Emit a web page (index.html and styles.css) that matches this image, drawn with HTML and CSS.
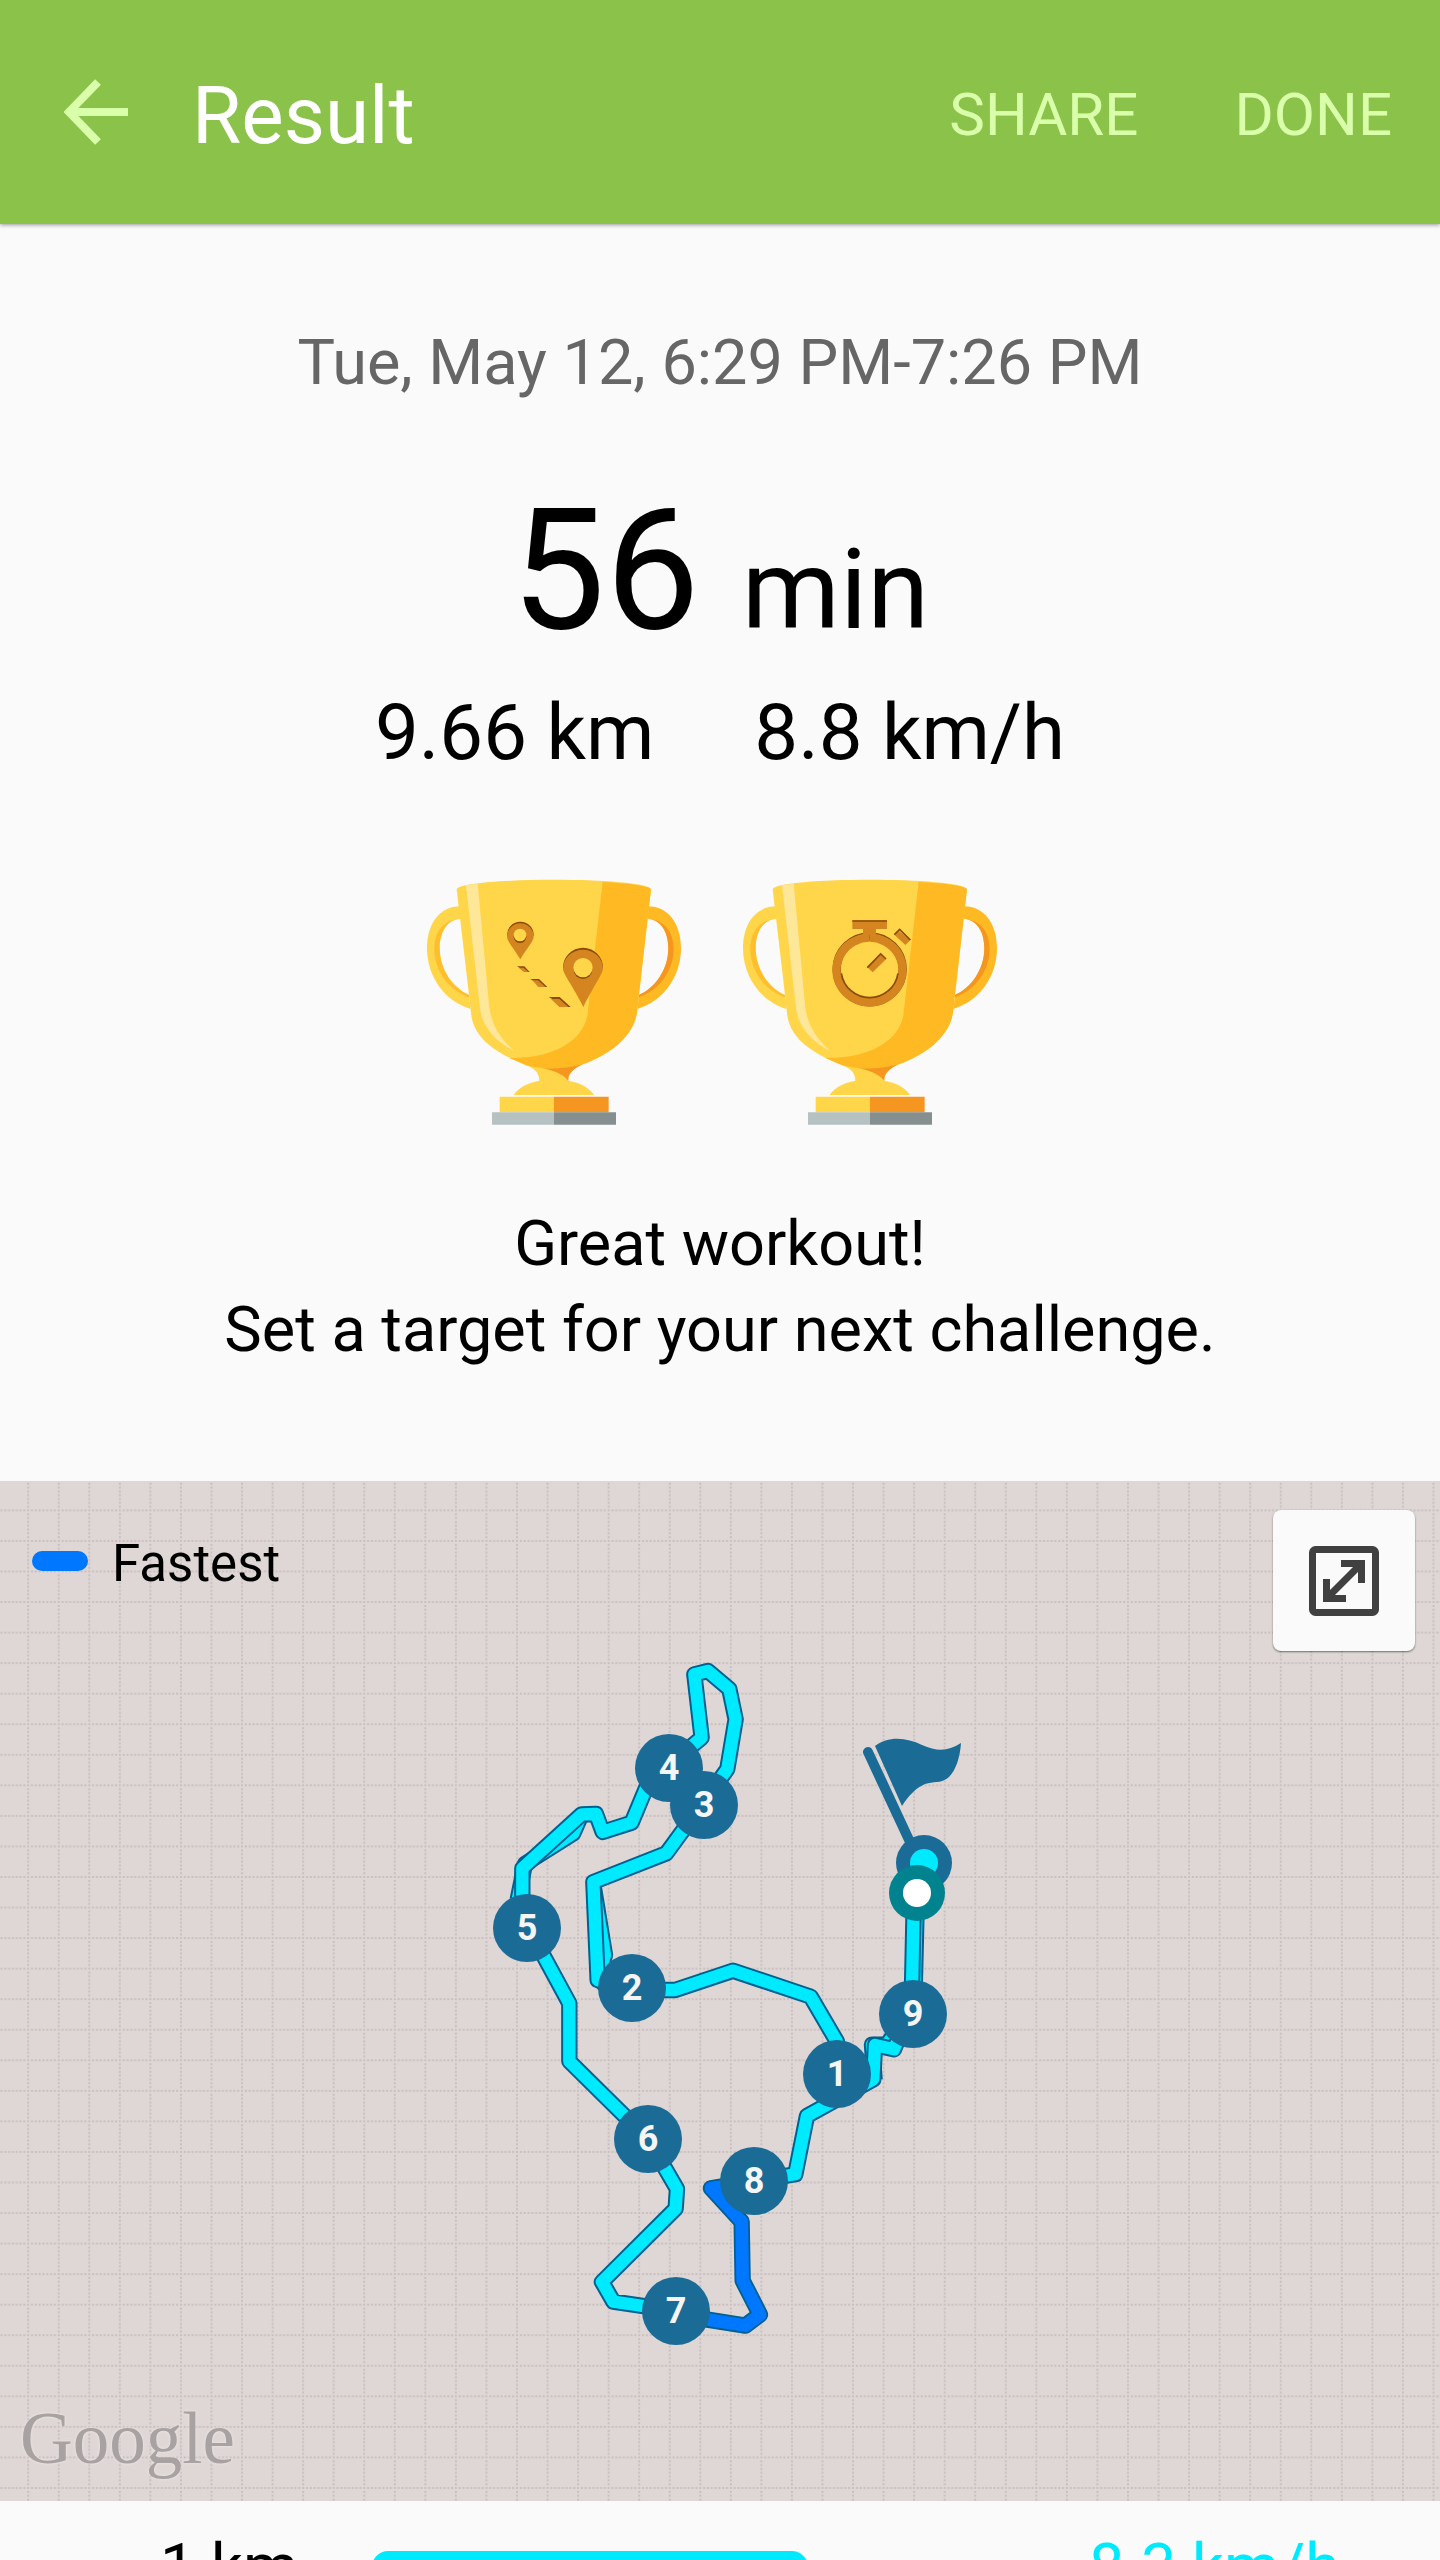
FILE: index.html
```
<!DOCTYPE html>
<html lang="en">
<head>
	<meta charset="UTF-8">
	<meta name="viewport" content="width=device-width, initial-scale=1">
	<title>Result</title>
	<link rel="stylesheet" href="styles.css">
</head>
<body>
	<header class="bar">
		<button type="button" class="back" aria-label="Back">
			<svg width="64" height="66" viewBox="0 0 64 66"><path d="M34 3 L5 33 L34 63 M5 33 H64" fill="none" stroke="#d9ffaa" stroke-width="8"/></svg>
		</button>
		<h1 class="bar-title">Result</h1>
		<button type="button" class="action">SHARE</button>
		<button type="button" class="action">DONE</button>
	</header>

	<main class="content">
		<section class="summary">
			<p class="date">Tue, May 12, 6:29 PM-7:26 PM</p>
			<p class="duration"><span class="num">56</span> <span class="unit">min</span></p>
			<p class="stats"><span>9.66 km</span> <span>8.8 km/h</span></p>
			<div class="trophies">
				<svg class="trophy" viewBox="12 57 948 738" role="img" aria-label="Distance trophy">
					<defs>
						<g id="cup">
							<path fill="#ffd54a" d="M180 139 C120 139 81 190 81 265 C81 350 135 425 212 447 L207 405 C160 385 119 330 119 265 C119 210 145 178 182 176Z"/>
							<path fill="#ffbe2b" d="M180 176 C130 180 103 215 103 268 C103 330 145 392 207 412 V405 C160 385 119 330 119 265 C119 210 145 178 180 176Z"/>
							<path fill="#ffb923" d="M744 139 C804 139 843 190 843 265 C843 350 789 425 712 447 L717 405 C764 385 805 330 805 265 C805 210 779 178 742 176Z"/>
							<path fill="#f4961f" d="M744 176 C794 180 821 215 821 268 C821 330 779 392 717 412 V405 C764 385 805 330 805 265 C805 210 779 178 744 176Z"/>
							<path fill="#ffd54a" d="M170 88 C185 50 739 50 753 88 L712 447 C708 520 640 580 548 613 C520 623 505 640 505 662 C540 668 570 684 582 705 H341 C355 682 385 668 418 662 C418 640 405 625 376 615 C280 575 214 530 212 447Z"/>
							<path fill="#ffb923" d="M608 66 C690 70 748 78 753 88 L712 447 C708 520 640 580 548 613 C500 630 430 630 380 616 L328 594 C470 596 560 535 564 450Z"/>
							<path fill="#f4961f" d="M425 625 C470 627 510 623 550 613 C520 625 503 642 505 662 C490 644 460 630 425 625Z"/>
							<path fill="#ffe799" d="M198 76 L233 71 L268 443 C276 500 305 540 344 574 C290 547 244 500 240 443Z"/>
							<path fill="#ffd54a" d="M299 710 H462 V757 H299Z"/>
							<path fill="#f4961f" d="M462 710 H626 V757 H462Z"/>
							<path fill="#b6c2c2" d="M276 757 H462 V794 H276Z"/>
							<path fill="#868f8f" d="M462 757 H648 V794 H462Z"/>
						</g>
					</defs>
					<use href="#cup"/>
					<g fill="#8a4a0a">
						<path d="M361 185 A40 40 0 0 1 401 227 H321 A40 40 0 0 1 361 185Z"/>
						<path d="M549 263 A60 60 0 0 1 609 324 H489 A60 60 0 0 1 549 263Z"/>
						<path d="M351 319 H373 L389 336 H379Z M391 357 H417 L442 381 H430Z M446 411 H479 L512 441 H500Z"/>
					</g>
					<g fill="#d5851f">
						<path d="M361 190 A40 39 0 0 1 401 229 C401 244 384 260 361 298 C338 260 321 244 321 229 A40 39 0 0 1 361 190Z"/>
						<path d="M549 269 A60 58 0 0 1 609 327 C606 345 580 380 550 441 C520 380 491 345 489 327 A60 58 0 0 1 549 269Z"/>
						<path d="M356 323 H371 L385 336 H372Z M397 361 H414 L436 381 H415Z M453 417 H478 L505 441 H478Z"/>
					</g>
					<g fill="#8a4a0a"><circle cx="360" cy="230" r="19"/><circle cx="549" cy="329" r="28"/></g>
					<g fill="#ffd54a"><circle cx="360" cy="225" r="19"/><circle cx="549" cy="323" r="29"/></g>
				</svg>
				<svg class="trophy" viewBox="12 57 948 738" role="img" aria-label="Duration trophy">
					<use href="#cup"/>
					<g fill="none" stroke-width="25">
						<circle cx="461" cy="328" r="99" stroke="#8a4a0a"/>
						<path stroke="#d5851f" d="M461 233 A99 97 0 1 1 460 233"/>
						<path stroke="#8a4a0a" stroke-width="5" d="M376 340 A86 86 0 0 0 546 340"/>
					</g>
					<path fill="#d5851f" d="M409 181 H513 V207 H480 V225 H441 V207 H409Z M549 213 L583 240 L568 255 L535 224Z M494 284 L510 298 L470 337 L454 322Z"/>
					<path fill="none" stroke="#8a4a0a" stroke-width="5" d="M409 183 H513 M535 224 L551 208 L583 240 M454 323 L494 282 L510 297"/>
				</svg>
			</div>
			<p class="message">Great workout!<br>Set a target for your next challenge.</p>
		</section>

		<section class="map">
			<svg class="map-canvas" viewBox="0 0 1440 1020" role="img" aria-label="Route">
				<defs>
					<pattern id="tile" x="27.2" y="28.4" width="30.55" height="30.55" patternUnits="userSpaceOnUse">
						<path d="M0 1 H30.55 M1 0 V30.55" stroke="#c8bfbe" stroke-width="2" stroke-dasharray="2 1.82"/>
					</pattern>
					<g id="route">
						<path d="M372 745 L405 945 L384 1015 L410 1040"/>
						<path d="M335 523 L310 580 L165 672 L143 780"/>
						<path d="M1341 760 L1333 1100 L1250 1214 L1206 1214 L1214 1320"/>
					</g>
					<path id="route-main" d="M1332 760 L1325 1100 L1272 1228 L1215 1215 L1210 1318 L1011 1428 L976 1603 L852 1623 M618 2013 L430 1985 L396 1926 L617 1706 L621 1647 L534 1497 L298 1264 L298 1090 L222 950 L157 864 L157 685 L335 523 L378 522 L398 576 L485 548 L530 440 L597 375 L695 293 L673 103 L714 93 L778 147 L797 238 L772 387 L702 485 L589 640 L370 726 L383 1020 L486 1050 L616 1050 L789 992 L1022 1070 L1101 1205 L1101 1300"/>
					<path id="route-fast" d="M852 1623 L723 1645 L815 1745 L818 1922 L870 2024 L826 2057 L618 2024"/>
				</defs>
				<rect width="1440" height="1020" fill="#dfd7d5"/>
				<rect width="1440" height="1020" fill="url(#tile)"/>
				<g transform="translate(470 159) scale(.3333)" fill="none" stroke-linejoin="round">
					<use href="#route" stroke="#00608f" stroke-width="49"/>
					<use href="#route" stroke="#00eaff" stroke-width="37"/>
					<use href="#route-main" stroke="#00608f" stroke-width="49"/>
					<use href="#route-main" stroke="#00eaff" stroke-width="37"/>
					<use href="#route-fast" stroke="#00608f" stroke-width="49"/>
					<use href="#route-fast" stroke="#0077ff" stroke-width="38"/>
				</g>
				<!-- finish flag -->
				<path d="M868 271 L910 361" stroke="#1a6b96" stroke-width="10" stroke-linecap="round"/>
				<path fill="#1a6b96" d="M875 265 C888 255 906 256 922 264 C938 271 948 270 961 262 C960 276 956 289 949 296 C941 303 934 300 925 303 C916 307 909 314 902 325Z"/>
				<circle cx="924" cy="382" r="28" fill="#1a6b96"/>
				<circle cx="924" cy="382" r="14" fill="#00eaff"/>
				<circle cx="917" cy="412" r="28" fill="#00838f"/>
				<circle cx="917" cy="412" r="14" fill="#fff"/>
				<g class="pin">
					<circle cx="913" cy="533" r="34"/><text x="913" y="545">9</text>
					<circle cx="754" cy="700" r="34"/><text x="754" y="712">8</text>
					<circle cx="676" cy="830" r="34"/><text x="676" y="842">7</text>
					<circle cx="648" cy="658" r="34"/><text x="648" y="670">6</text>
					<circle cx="527" cy="447" r="34"/><text x="527" y="459">5</text>
					<circle cx="669" cy="287" r="34"/><text x="669" y="299">4</text>
					<circle cx="704" cy="324" r="34"/><text x="704" y="336">3</text>
					<circle cx="632" cy="507" r="34"/><text x="632" y="519">2</text>
					<circle cx="837" cy="593" r="34"/><text x="837" y="605">1</text>
				</g>
			</svg>
			<div class="legend"><span class="swatch"></span>Fastest</div>
			<button type="button" class="expand" aria-label="Expand map">
				<svg width="70" height="70" viewBox="0 0 70 70" fill="none" stroke="#404040" stroke-width="7">
					<rect x="3.5" y="3.5" width="63" height="63" rx="3"/>
					<path d="M32 17.5 H52.5 V37 M52 18 L18 52 M17.500 33 V52.500 H37"/>
				</svg>
			</button>
			<span class="brand">Google</span>
		</section>

		<ul class="splits">
			<li class="split">
				<span class="split-km">1 km</span>
				<span class="split-track"><span class="split-bar" style="width: 64%"></span></span>
				<span class="split-speed">8.3 km/h</span>
			</li>
		</ul>
	</main>
</body>
</html>
```
FILE: styles.css
```
* {margin: 0; padding: 0; box-sizing: border-box;}
body {height: 100vh; overflow: hidden; display: flex; flex-direction: column; background: #fafafa; color: #000; font-family: Roboto, "Liberation Sans", sans-serif;}
button {border: 0; background: none; font-family: inherit; cursor: pointer;}
svg {display: block;}

/* top bar */
.bar {position: relative; flex: none; display: flex; align-items: center; height: 224px; padding: 0 48px 0 64px; background: #8bc34a; box-shadow: 0 1px 4px rgba(0,0,0,.4);}
.bar-title {flex: 1; margin-left: 64px; padding-top: 8px; font-size: 80px; font-weight: 400; line-height: 96px; color: #fff;}
.action {margin-left: 96px; padding-top: 6px; font-size: 60px; line-height: 72px; color: #d9ffaa;}

.content {flex: 1; min-height: 0; overflow: hidden;}

/* workout summary */
.summary {display: flex; flex-direction: column; align-items: center; padding: 99px 32px 108px; text-align: center;}
.date {font-size: 63px; line-height: 80px; color: #666;}
.duration {display: flex; align-items: baseline; gap: 42px; margin-top: 68px;}
.duration .num {font-size: 168px; line-height: 200px;}
.duration .unit {font-size: 112px; line-height: 120px;}
.stats {display: flex; gap: 100px; margin-top: 14px; font-size: 78px; line-height: 96px;}
.trophies {display: flex; margin-top: 98px;}
.trophy {width: 316px; height: 246px;}
.message {margin-top: 76px; font-size: 63px; line-height: 86px;}

/* map */
.map {position: relative;}
.map-canvas {width: 100%; height: auto;}
.pin circle {fill: #1a6b96;}
.pin text {fill: #f5f5f5; font-size: 36px; font-weight: 700; text-anchor: middle;}
.legend {position: absolute; left: 32px; top: 51px; display: flex; align-items: center; gap: 24px; font-size: 51px; line-height: 64px;}
.swatch {width: 56px; height: 20px; margin-bottom: 6px; border-radius: 10px; background: #0077ff;}
.expand {position: absolute; right: 25px; top: 29px; display: flex; align-items: center; justify-content: center; width: 142px; height: 141px; border-radius: 8px; background: #fafafa; box-shadow: 0 1px 2px rgba(0,0,0,.5);}
.brand {position: absolute; left: 20px; bottom: 22px; font: 73px/80px "Liberation Serif", serif; color: #a8a2a2; text-shadow: 0 0 3px #f0ebea;}

/* splits */
.splits {list-style: none; padding: 28px 100px 0 160px;}
.split {display: flex; align-items: center; font-size: 63px; line-height: 76px;}
.split-km {width: 212px;}
.split-track {flex: 1; margin-right: 36px;}
.split-bar {display: block; height: 32px; border-radius: 16px; background: #00eaff;}
.split-speed {color: #00eaff;}
```
